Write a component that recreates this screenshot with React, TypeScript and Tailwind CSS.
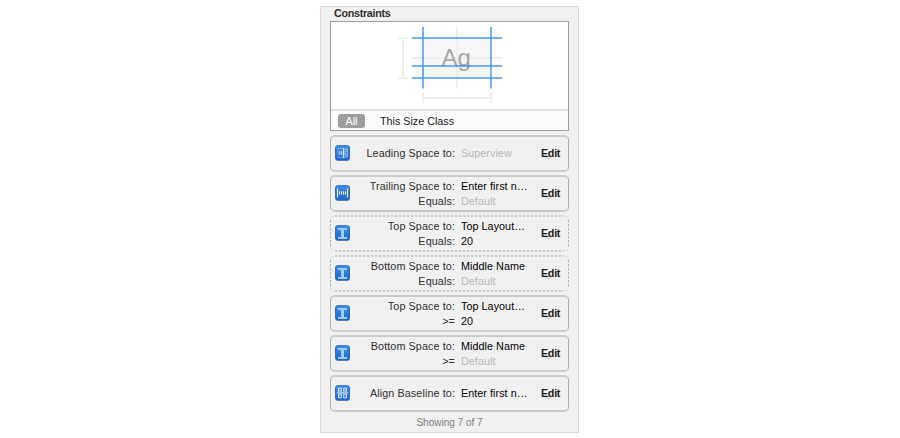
type Glyph = "leading" | "trailing" | "vertical" | "baseline";

interface Constraint {
  glyph: Glyph;
  label: string;
  value: string;
  muted?: boolean;
  relation?: string;
  constant?: string;
  dashed?: boolean;
}

const constraints: Constraint[] = [
  { glyph: "leading", label: "Leading Space to:", value: "Superview", muted: true },
  { glyph: "trailing", label: "Trailing Space to:", value: "Enter first n…", relation: "Equals:", constant: "Default" },
  { glyph: "vertical", label: "Top Space to:", value: "Top Layout…", relation: "Equals:", constant: "20", dashed: true },
  { glyph: "vertical", label: "Bottom Space to:", value: "Middle Name", relation: "Equals:", constant: "Default", dashed: true },
  { glyph: "vertical", label: "Top Space to:", value: "Top Layout…", relation: ">=", constant: "20" },
  { glyph: "vertical", label: "Bottom Space to:", value: "Middle Name", relation: ">=", constant: "Default" },
  { glyph: "baseline", label: "Align Baseline to:", value: "Enter first n…" },
];

function Icon({ glyph }: { glyph: Glyph }) {
  return (
    <svg width="15" height="16" viewBox="0 0 15 16" className="mb-px shrink-0">
      <defs>
        <linearGradient id="blue" x1="0" y1="0" x2="0" y2="1">
          <stop offset="0" stopColor="#4390ea" />
          <stop offset="1" stopColor="#1c66d2" />
        </linearGradient>
      </defs>
      <rect x="0.5" y="0.7" width="14" height="14.6" rx="2" fill="url(#blue)" stroke="#2b6cc0" />
      {glyph === "leading" && (
        <g fill="none" stroke="#d8e8fc">
          <path d="M8 3.5H3V12.5H8" strokeWidth="0.8" opacity="0.45" />
          <path d="M4.8 6V10M6.6 6V10" strokeWidth="0.9" />
          <path d="M8.5 3.2V12.8" strokeWidth="1.2" />
          <path d="M9 4H12.3V12H9" strokeWidth="0.9" opacity="0.7" />
          <path d="M12 6H10V10H12" strokeWidth="0.9" opacity="0.8" />
        </g>
      )}
      {glyph === "trailing" && (
        <g stroke="#e3effd" fill="none">
          <path d="M2.5 3.5V12.5M12.5 3.5V12.5" strokeWidth="1.1" />
          <path d="M4.5 6.3V9.7M6.5 6.3V9.7M8.5 6.3V9.7M10.5 6.3V9.7" />
        </g>
      )}
      {glyph === "vertical" && (
        <path d="M3 3H12V5H9V12H12V14H3V12H6V5H3Z" fill="#a5cafa" />
      )}
      {glyph === "baseline" && (
        <g stroke="#dceafb" fill="none">
          <path d="M2 8H13" />
          <path d="M3.5 6H6.3V3.2H3.5ZM8.7 6H11.5V3.2H8.7ZM3.5 12.8H6.3V9.8H3.5ZM8.7 12.8H11.5V9.8H8.7Z" />
          <path d="M3.5 6V10M6.3 6V10M8.7 6V10M11.5 6V10" strokeWidth="0.8" opacity="0.7" />
        </g>
      )}
    </svg>
  );
}

function Preview() {
  return (
    <svg width="237" height="87" viewBox="331 22 237 87" className="block">
      <rect x="424" y="39" width="66" height="38" fill="#f6f6f6" />
      <g fill="#efefef">
        <rect x="456" y="27" width="2" height="62" />
        <rect x="412" y="57" width="90" height="2" />
        <rect x="402" y="37" width="2" height="42" />
        <rect x="398" y="37" width="10" height="2" />
        <rect x="398" y="77" width="10" height="2" />
        <rect x="422" y="97" width="70" height="2" />
        <rect x="422" y="93" width="2" height="10" />
        <rect x="490" y="93" width="2" height="10" />
      </g>
      <text x="441.5" y="66" fontSize="24.5" textLength="29.5" lengthAdjust="spacingAndGlyphs" fill="#a6a6a6" fontFamily="Liberation Sans">Ag</text>
      <g fill="#1a7ff5" fillOpacity="0.6">
        <rect x="422" y="27" width="2" height="61.5" />
        <rect x="490" y="27" width="2" height="61.5" />
        <rect x="412" y="37" width="90" height="2" />
        <rect x="412" y="65" width="90" height="2" />
        <rect x="412" y="77" width="90" height="2" />
      </g>
    </svg>
  );
}

function DashedFrame() {
  return (
    <svg width="239" height="37" className="pointer-events-none absolute inset-0">
      <path d="M5 1H234M5 36H234" stroke="#cecece" strokeWidth="2" strokeDasharray="2.5 1.5" />
      <path d="M.5 5V32M238.5 5V32" stroke="#aaa" strokeDasharray="2.5 1.5" />
      <path d="M.8 3.5L3 1.2M236 1.2L238.2 3.5M.8 33.5L3 35.8M236 35.8L238.2 33.5" stroke="#c2c2c2" strokeDasharray="1.5 1" />
    </svg>
  );
}

function Row({ item }: { item: Constraint }) {
  return (
    <div
      className={
        item.dashed
          ? "relative flex h-[37px] items-center pl-[5px]"
          : "flex h-[37px] items-center rounded-[5px] border-x border-y-2 border-x-[#b0b0b0] border-y-[#cbcbcb] pl-1"
      }
    >
      {item.dashed && <DashedFrame />}
      <Icon glyph={item.glyph} />
      <div className="w-[105px] text-right leading-[15px] tracking-[0.11px] text-[#303030]">
        <div>{item.label}</div>
        {item.relation && <div>{item.relation}</div>}
      </div>
      <div className="ml-1.5 w-20 leading-[15px] tracking-[0.06px] text-black">
        <div className={item.muted ? "text-[#b8b8b8]" : ""}>{item.value}</div>
        {item.constant && <div className={item.constant === "Default" ? "text-[#b8b8b8]" : ""}>{item.constant}</div>}
      </div>
      <div className="font-bold tracking-[-0.3px] text-[#222]">Edit</div>
    </div>
  );
}

export default function App() {
  return (
    <div className="h-[438px] w-[900px] overflow-hidden bg-white pt-1.5 pl-[320px] font-['Liberation_Sans',Arial,sans-serif] text-[10.75px] whitespace-nowrap">
      <div className="h-[427px] w-[259px] border border-[#dadada] bg-[#f1f1f1] px-[9px]">
        <h2 className="h-[14px] pl-1 leading-[13px] font-bold tracking-[-0.3px] text-[#303030]">Constraints</h2>
        <div className="h-[110px] border border-[#9f9f9f] bg-white">
          <Preview />
          <div className="flex h-[21px] items-center border-t-2 border-[#e0e0e0] bg-[#fcfcfc] pl-[7px]">
            <span className="h-[14px] w-[27px] rounded-[3px] bg-[#9e9e9e] text-center leading-[15px] text-white">All</span>
            <span className="ml-[15px] pt-px text-[#222]">This Size Class</span>
          </div>
        </div>
        <div className="mt-1 flex flex-col gap-[3px]">
          {constraints.map((item, index) => (
            <Row key={index} item={item} />
          ))}
        </div>
        <div className="mt-[3px] text-center text-[10px] leading-[15px] text-[#808080]">Showing 7 of 7</div>
      </div>
    </div>
  );
}
